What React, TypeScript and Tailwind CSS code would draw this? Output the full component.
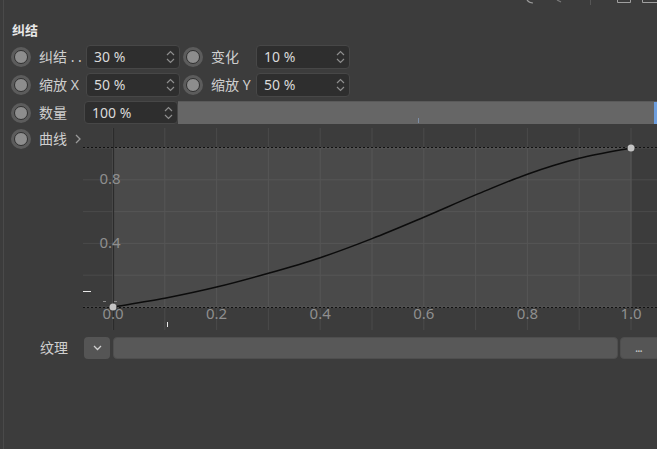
import React from 'react';

const VALUES = [0, 0.055, 0.125, 0.212, 0.31, 0.43, 0.565, 0.705, 0.835, 0.935, 1];

function curvePath() {
  const pts = VALUES.map((v, i) => [30 + (i / 10) * 518, 179 - v * 159]);
  let d = `M ${pts[0][0]} ${pts[0][1]}`;
  for (let i = 0; i < pts.length - 1; i++) {
    const p0 = pts[i - 1] || pts[i];
    const p1 = pts[i];
    const p2 = pts[i + 1];
    const p3 = pts[i + 2] || p2;
    const c1 = [p1[0] + (p2[0] - p0[0]) / 6, p1[1] + (p2[1] - p0[1]) / 6];
    const c2 = [p2[0] - (p3[0] - p1[0]) / 6, p2[1] - (p3[1] - p1[1]) / 6];
    d += ` C ${c1[0].toFixed(1)} ${c1[1].toFixed(1)} ${c2[0].toFixed(1)} ${c2[1].toFixed(1)} ${p2[0].toFixed(1)} ${p2[1].toFixed(1)}`;
  }
  return d;
}

function Radio() {
  return (
    <div className="w-[20px] h-[20px] rounded-full bg-[#5c5c5c] flex items-center justify-center shrink-0">
      <div className="w-[14px] h-[14px] rounded-full bg-[#8d8d8d] border-[1.5px] border-[#2f2f2f]" />
    </div>
  );
}

function Spinner() {
  return (
    <svg width="9" height="14" viewBox="0 0 9 14" className="shrink-0">
      <path d="M1 5 L4.5 1.5 L8 5" fill="none" stroke="#8e8e8e" strokeWidth="1.2" />
      <path d="M1 9 L4.5 12.5 L8 9" fill="none" stroke="#8e8e8e" strokeWidth="1.2" />
    </svg>
  );
}

function NumInput({ value, h = 'h-[24px]' }: { value: string; h?: string }) {
  return (
    <div className={`w-[94px] ${h} shrink-0 bg-[#2e2e2e] border border-[#474747] rounded-[4px] flex items-center justify-between pl-[7px] pr-[4px]`}>
      <span className="text-[14px] text-[#dadada] leading-none">{value}</span>
      <Spinner />
    </div>
  );
}

function Label({ text, w }: { text: string; w: string }) {
  return <div className={`${w} ml-[8px] shrink-0 text-[14px] text-[#cfcfcf] leading-none whitespace-nowrap`}>{text}</div>;
}

function Chart() {
  const xs = Array.from({ length: 11 }, (_, i) => 30 + i * 51.8);
  const ys = Array.from({ length: 6 }, (_, j) => 20 + j * 31.8);
  const xl = ['0.0', '0.2', '0.4', '0.6', '0.8', '1.0'];
  return (
    <svg width="574" height="202" viewBox="0 0 574 202" className="shrink-0">
      {xs.map((x, i) => <line key={'v' + i} x1={x} y1={0} x2={x} y2={202} stroke="#4a4a4a" strokeWidth="1" />)}
      {ys.map((y, i) => <line key={'h' + i} x1={0} y1={y} x2={574} y2={y} stroke="#4a4a4a" strokeWidth="1" />)}
      <rect x="30" y="20" width="518" height="159" fill="#4a4a4a" />
      {xs.map((x, i) => <line key={'vi' + i} x1={x} y1={20} x2={x} y2={179} stroke="#565656" strokeWidth="1" />)}
      {ys.map((y, i) => <line key={'hi' + i} x1={30} y1={y} x2={548} y2={y} stroke="#565656" strokeWidth="1" />)}
      <line x1="30.5" y1="0" x2="30.5" y2="202" stroke="#2b2b2b" strokeWidth="1.2" />
      <line x1="0" y1="19.5" x2="574" y2="19.5" stroke="#111" strokeWidth="1" strokeDasharray="2 2" />
      <line x1="0" y1="179.5" x2="574" y2="179.5" stroke="#111" strokeWidth="1" strokeDasharray="2 2" />
      <text x="27" y="56" textAnchor="middle" fontSize="15" fill="#8f8f8f" fontFamily="Noto Sans, sans-serif">0.8</text>
      <text x="27" y="119.5" textAnchor="middle" fontSize="15" fill="#8f8f8f" fontFamily="Noto Sans, sans-serif">0.4</text>
      {xl.map((t, i) => (
        <text key={t} x={30 + i * 103.6} y="191" textAnchor="middle" fontSize="15" fill="#8f8f8f" fontFamily="Noto Sans, sans-serif">{t}</text>
      ))}
      <line x1="0" y1="163.5" x2="8" y2="163.5" stroke="#e8e8e8" strokeWidth="1" />
      <line x1="84.5" y1="194" x2="84.5" y2="199" stroke="#e8e8e8" strokeWidth="1" />
      <line x1="20" y1="173.5" x2="23" y2="173.5" stroke="#8a8a8a" strokeWidth="1" />
      <line x1="31" y1="173.5" x2="34" y2="173.5" stroke="#8a8a8a" strokeWidth="1" />
      <path d={curvePath()} fill="none" stroke="#0c0c0c" strokeWidth="1.5" />
      <circle cx="30" cy="179" r="3.5" fill="#c4c4c4" />
      <circle cx="548" cy="20" r="3.5" fill="#c4c4c4" />
    </svg>
  );
}

export default function App() {
  return (
    <div className="w-[657px] h-[449px] bg-[#3c3c3c] overflow-hidden flex font-['Noto_Sans','Noto_Sans_CJK_SC',sans-serif]">
      <div className="w-[3px] shrink-0" />
      <div className="flex-1 flex flex-col border-l border-[#4a4a4a] min-w-0">
        <svg width="653" height="6" viewBox="0 0 653 6" className="shrink-0">
          <path d="M523 0 Q525 3 529 3" fill="none" stroke="#9a9a9a" strokeWidth="1.2" />
          <path d="M553 0 L557 2" fill="none" stroke="#7a7a7a" strokeWidth="1.2" />
          <line x1="586.5" y1="0" x2="586.5" y2="5" stroke="#565656" strokeWidth="1" />
          <path d="M613.5 0 V2.5 H626.5 V0" fill="none" stroke="#a0a0a0" strokeWidth="1" />
          <path d="M638.5 0 V2.5 H653" fill="none" stroke="#a0a0a0" strokeWidth="1" />
        </svg>
        <div className="mt-[16px] pl-[8px] h-[17px] leading-[17px] text-[13px] font-bold text-[#e8e8e8]">纠结</div>

        <div className="mt-[6px] h-[24px] flex items-center pl-[7px]">
          <Radio />
          <Label text="纠结 . ." w="w-[47px]" />
          <NumInput value="30 %" />
          <div className="ml-[3px]"><Radio /></div>
          <Label text="变化" w="w-[45px]" />
          <NumInput value="10 %" />
        </div>

        <div className="mt-[4px] h-[24px] flex items-center pl-[7px]">
          <Radio />
          <Label text="缩放 X" w="w-[47px]" />
          <NumInput value="50 %" />
          <div className="ml-[3px]"><Radio /></div>
          <Label text="缩放 Y" w="w-[45px]" />
          <NumInput value="50 %" />
        </div>

        <div className="mt-[4px] h-[23px] flex items-center pl-[7px]">
          <Radio />
          <Label text="数量" w="w-[45px]" />
          <NumInput value="100 %" h="h-[23px]" />
          <div className="flex-1 h-[23px] bg-[#666666] border-t border-[#5a5a5a] flex items-end justify-between">
            <div className="w-[240px]" />
            <div className="w-px h-[5px] bg-[#7d8ea6] mb-[1px]" />
            <div className="flex-1" />
            <div className="w-[3px] h-full bg-[#6c9ddd]" />
          </div>
        </div>

        <div className="mt-[4px] flex items-start">
          <div className="w-[79px] shrink-0 pl-[7px] mt-[1px] h-[20px] flex items-center">
            <Radio />
            <span className="ml-[8px] text-[14px] text-[#cfcfcf] leading-none">曲线</span>
            <svg width="6" height="10" viewBox="0 0 6 10" className="ml-[8px]">
              <path d="M1 1 L5 5 L1 9" fill="none" stroke="#9a9a9a" strokeWidth="1.3" />
            </svg>
          </div>
          <Chart />
        </div>

        <div className="mt-[7px] h-[22px] flex items-center">
          <div className="ml-[36px] w-[44px] shrink-0 text-[14px] text-[#cfcfcf] leading-none">纹理</div>
          <div className="w-[26px] h-[22px] shrink-0 rounded-[4px] bg-[#555555] flex items-center justify-center">
            <svg width="9" height="6" viewBox="0 0 9 6">
              <path d="M1 1 L4.5 4.5 L8 1" fill="none" stroke="#d0d0d0" strokeWidth="1.3" />
            </svg>
          </div>
          <div className="ml-[3px] w-[505px] h-[22px] shrink-0 rounded-[4px] bg-[#585858] border border-[#4e4e4e]" />
          <div className="ml-[2px] w-[40px] h-[22px] shrink-0 rounded-[4px] bg-[#555555] border border-[#4e4e4e] flex items-center pl-[14px]">
            <span className="text-[12px] text-[#c8c8c8] leading-none tracking-[-1px]">...</span>
          </div>
        </div>
      </div>
    </div>
  );
}
